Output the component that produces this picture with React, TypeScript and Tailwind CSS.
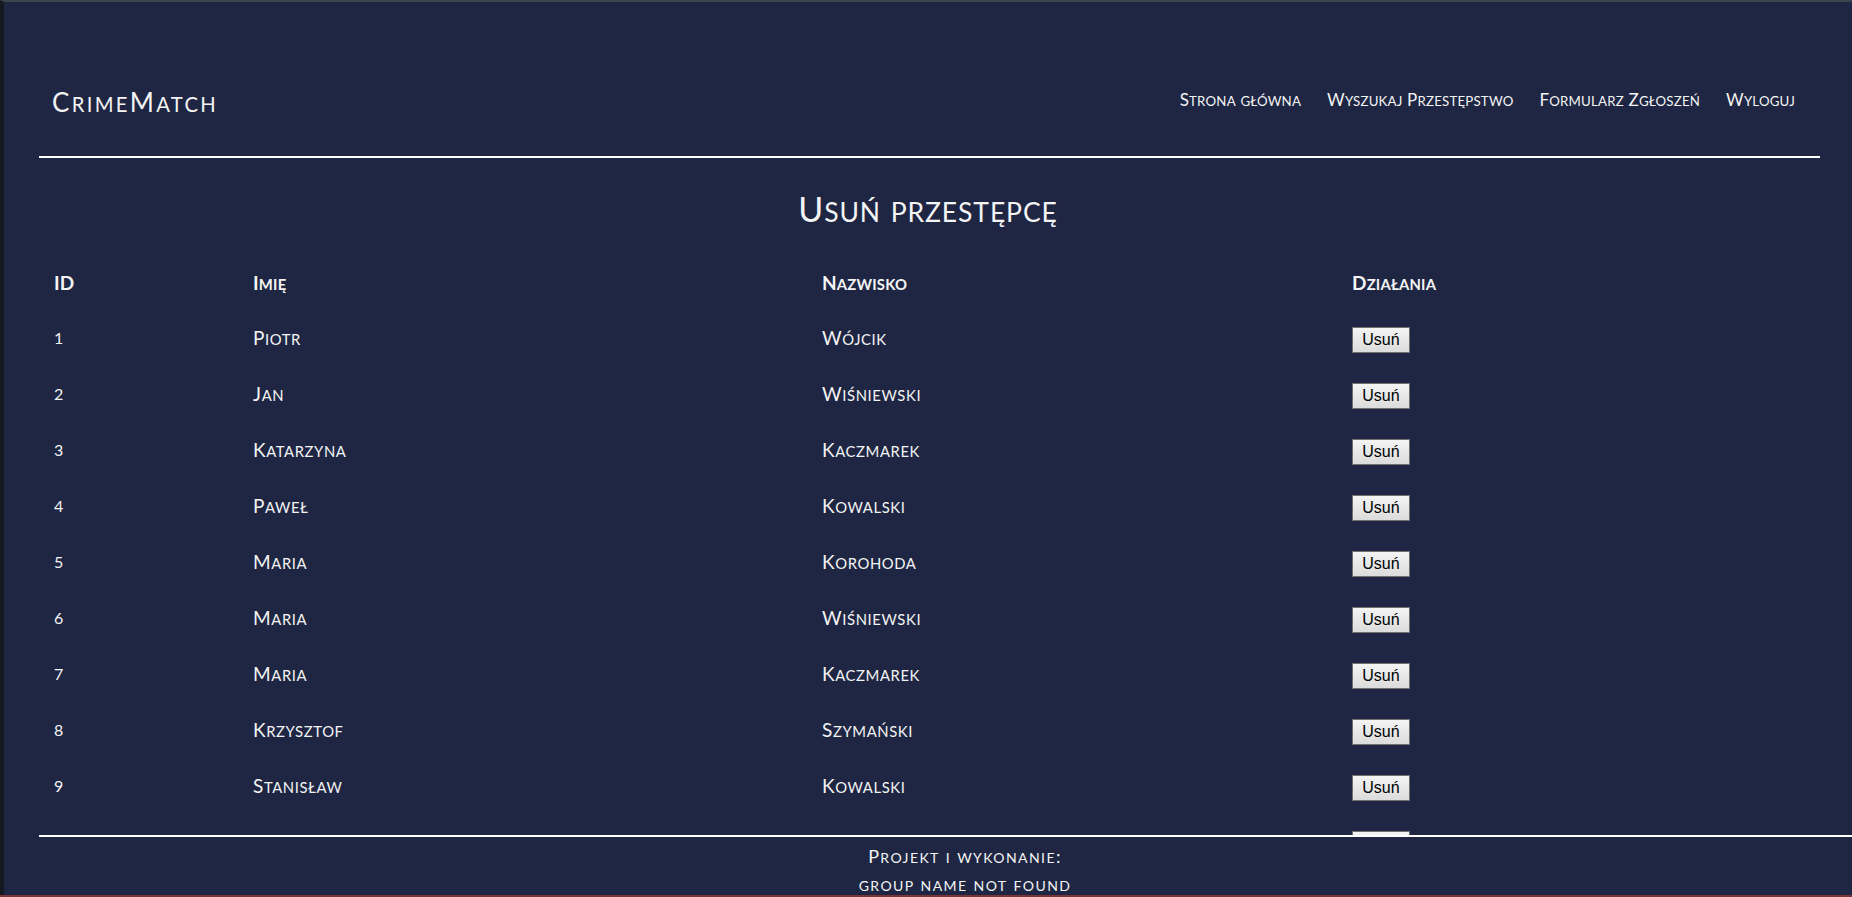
import React from "react";

const rows: [number, string, string][] = [
  [1, "Piotr", "Wójcik"],
  [2, "Jan", "Wiśniewski"],
  [3, "Katarzyna", "Kaczmarek"],
  [4, "Paweł", "Kowalski"],
  [5, "Maria", "Korohoda"],
  [6, "Maria", "Wiśniewski"],
  [7, "Maria", "Kaczmarek"],
  [8, "Krzysztof", "Szymański"],
  [9, "Stanisław", "Kowalski"],
  [10, "Tomasz", "Nowak"],
];

function SC({ text }: { text: string }) {
  const parts: { t: string; small: boolean }[] = [];
  for (const ch of text) {
    const small = ch !== ch.toUpperCase();
    const last = parts[parts.length - 1];
    if (last && last.small === small) last.t += ch;
    else parts.push({ t: ch, small });
  }
  return (
    <span>
      {parts.map((p, i) =>
        p.small ? (
          <span key={i} className="text-[0.78em]">
            {p.t.toUpperCase()}
          </span>
        ) : (
          <span key={i}>{p.t}</span>
        )
      )}
    </span>
  );
}

const font = { fontFamily: "Lato, 'Open Sans', sans-serif" };

export default function App() {
  return (
    <div className="min-h-screen bg-[#1e2643] border-l-4 border-l-[#14191f] border-t-2 border-t-[#3b434c] text-[#f4f4f4]" style={font}>
      <header className="ml-[35px] mr-[32px] h-[156px] border-b-2 border-white flex items-center justify-between pl-[13px] pr-[25px] pt-[42px]">
        <div className="text-[26px] leading-none tracking-[2.3px] mt-[4px]"><SC text="CrimeMatch" /></div>
        <nav className="flex gap-[26px] text-[17px] leading-none tracking-[0.2px]">
          <a><SC text="Strona główna" /></a>
          <a><SC text="Wyszukaj Przestępstwo" /></a>
          <a><SC text="Formularz Zgłoszeń" /></a>
          <a><SC text="Wyloguj" /></a>
        </nav>
      </header>
      <h1 className="text-center text-[34px] leading-none mt-[34px] tracking-[0.9px]"><SC text="Usuń przestępcę" /></h1>
      <div className="ml-[50px] mt-[37px]">
        <div className="grid grid-cols-[199px_569px_530px_1fr] h-[40px] items-center font-bold text-[19px] tracking-[0.2px]">
          <div><SC text="ID" /></div>
          <div><SC text="Imię" /></div>
          <div><SC text="Nazwisko" /></div>
          <div><SC text="Działania" /></div>
        </div>
        <div className="pt-[7px]">
          {rows.map(([id, imie, nazwisko]) => (
            <div key={id} className="grid grid-cols-[199px_569px_530px_1fr] h-[56px] items-center text-[19px] tracking-[0.6px]">
              <div className="text-[16px]">{id}</div>
              <div><SC text={imie} /></div>
              <div><SC text={nazwisko} /></div>
              <div>
                <button className="w-[58px] h-[26px] bg-gradient-to-b from-[#f4f4f4] to-[#dcdcdc] border border-[#6f6f6f] text-black text-[16px] leading-none tracking-normal" style={{ fontFamily: "'Liberation Sans', Arial, sans-serif" }}>
                  Usuń
                </button>
              </div>
            </div>
          ))}
        </div>
      </div>
      <footer className="fixed bottom-[2px] left-[39px] w-screen h-[60px] bg-[#1e2643] border-t-2 border-white flex flex-col items-center text-[18px] leading-none tracking-[1.4px] pt-[10px] gap-[10px]">
        <div><SC text="Projekt i wykonanie:" /></div>
        <div><SC text="group name not found" /></div>
      </footer>
      <div className="fixed bottom-0 left-0 w-full h-[2px] bg-[#7a3636]" />
    </div>
  );
}
